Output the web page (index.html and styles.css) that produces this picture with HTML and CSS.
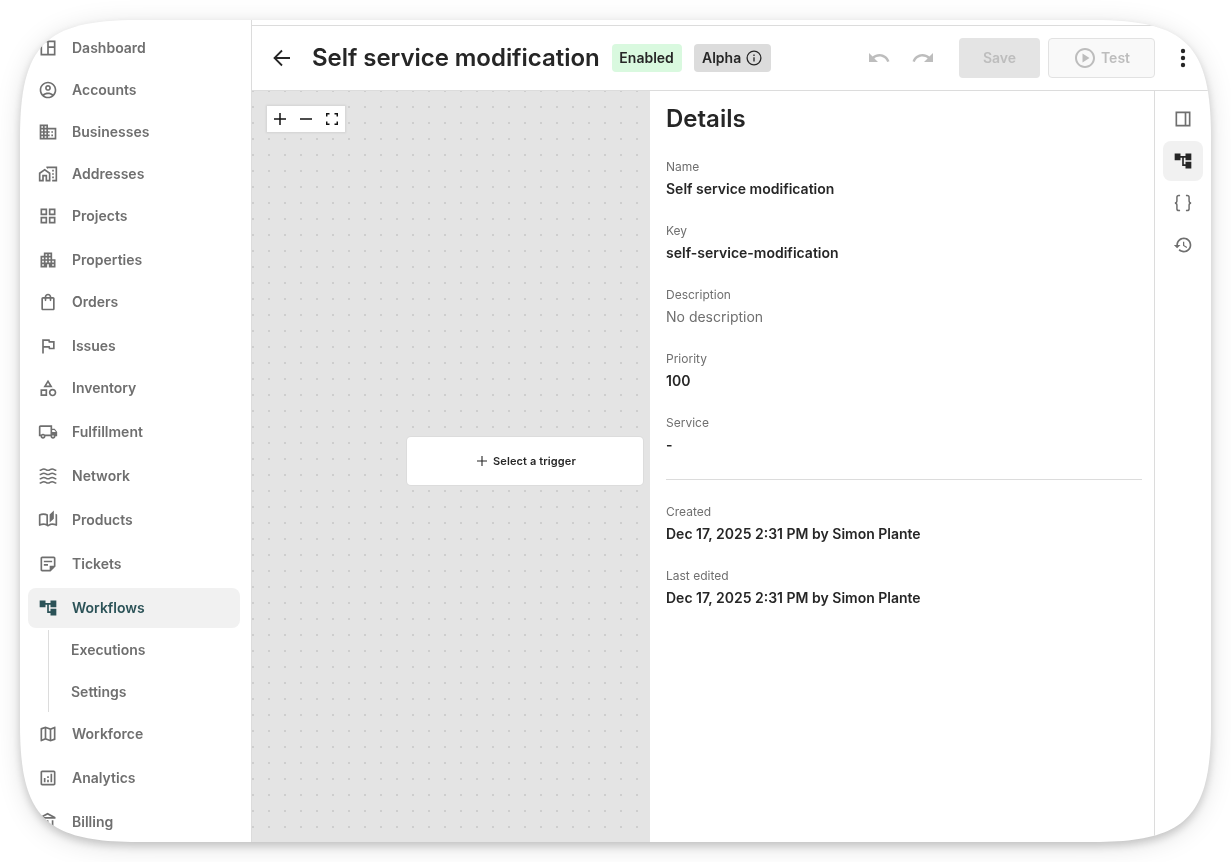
FILE: index.html
```html
<!DOCTYPE html>
<html lang="en">
<head>
    <meta charset="UTF-8">
    <meta name="viewport" content="width=device-width, initial-scale=1.0">
    <title>Self service modification - Workflows</title>
    <link rel="stylesheet" href="styles.css">
</head>
<body>
    <div class="window-shadow">
    <div class="window">

        <!-- Sidebar -->
        <nav class="sidebar">
            <a class="nav-item">
                <svg viewBox="0 0 24 24"><path d="M3 3v18h18V3H3zm2 2h6v14H5V5zm8 0h6v5h-6V5zm0 7h6v7h-6v-7z"/></svg>
                Dashboard
            </a>
            <a class="nav-item">
                <svg viewBox="0 0 24 24"><path d="M12 2C6.48 2 2 6.48 2 12s4.48 10 10 10 10-4.48 10-10S17.52 2 12 2zM7.35 18.5C8.66 17.56 10.26 17 12 17s3.34.56 4.65 1.5C15.34 19.44 13.74 20 12 20s-3.34-.56-4.65-1.5zm10.79-1.38C16.45 15.8 14.32 15 12 15s-4.45.8-6.14 2.12C4.7 15.73 4 13.95 4 12c0-4.42 3.58-8 8-8s8 3.58 8 8c0 1.95-.7 3.73-1.86 5.12zM12 6c-1.93 0-3.5 1.57-3.5 3.5S10.07 13 12 13s3.5-1.57 3.5-3.5S13.93 6 12 6zm0 5c-.83 0-1.5-.67-1.5-1.5S11.17 8 12 8s1.5.67 1.5 1.5S12.83 11 12 11z"/></svg>
                Accounts
            </a>
            <a class="nav-item">
                <svg viewBox="0 0 24 24"><path d="M12 7V3H2v18h20V7H12zM6 19H4v-2h2v2zm0-4H4v-2h2v2zm0-4H4V9h2v2zm0-4H4V5h2v2zm4 12H8v-2h2v2zm0-4H8v-2h2v2zm0-4H8V9h2v2zm0-4H8V5h2v2zm10 12h-8v-2h2v-2h-2v-2h2v-2h-2V9h8v10zm-2-8h-2v2h2v-2zm0 4h-2v2h2v-2z"/></svg>
                Businesses
            </a>
            <a class="nav-item">
                <svg viewBox="0 0 24 24"><path d="M17 7h2v2h-2zM17 11h2v2h-2zM17 15h2v2h-2zM10 3v1.5l2 1.35V5h9v14h-4v2h6V3z"/><path fill-rule="evenodd" d="M8 5.6l7 5V21H9v-6H7v6H1V10.6l7-5zM3 11.6V19h2v-6h6v6h2v-7.4L8 8z"/></svg>
                Addresses
            </a>
            <a class="nav-item">
                <svg viewBox="0 0 24 24"><path d="M3 3v8h8V3H3zm6 6H5V5h4v4zm-6 4v8h8v-8H3zm6 6H5v-4h4v4zm4-16v8h8V3h-8zm6 6h-4V5h4v4zm-6 4v8h8v-8h-8zm6 6h-4v-4h4v4z"/></svg>
                Projects
            </a>
            <a class="nav-item spaced">
                <svg viewBox="0 0 24 24"><path d="M17 11V3H7v4H3v14h8v-4h2v4h8V11h-4zM7 19H5v-2h2v2zm0-4H5v-2h2v2zm0-4H5V9h2v2zm4 4H9v-2h2v2zm0-4H9V9h2v2zm0-4H9V5h2v2zm4 8h-2v-2h2v2zm0-4h-2V9h2v2zm0-4h-2V5h2v2zm4 12h-2v-2h2v2zm0-4h-2v-2h2v2z"/></svg>
                Properties
            </a>
            <a class="nav-item">
                <svg viewBox="0 0 24 24"><path d="M18 6h-2c0-2.21-1.79-4-4-4S8 3.79 8 6H6c-1.1 0-2 .9-2 2v12c0 1.1.9 2 2 2h12c1.1 0 2-.9 2-2V8c0-1.1-.9-2-2-2zm-6-2c1.1 0 2 .9 2 2h-4c0-1.1.9-2 2-2zm6 16H6V8h2v2c0 .55.45 1 1 1s1-.45 1-1V8h4v2c0 .55.45 1 1 1s1-.45 1-1V8h2v12z"/></svg>
                Orders
            </a>
            <a class="nav-item spaced">
                <svg viewBox="0 0 24 24"><path d="M12.36 6l.4 2H18v6h-3.36l-.4-2H7V6h5.36M14 4H5v17h2v-7h5.6l.4 2h7V6h-5.6L14 4z"/></svg>
                Issues
            </a>
            <a class="nav-item">
                <svg viewBox="0 0 24 24"><path d="M12 2l-5.5 9h11L12 2zm0 3.84L13.93 9h-3.87L12 5.84zM17.5 13c-2.49 0-4.5 2.01-4.5 4.5s2.01 4.5 4.5 4.5 4.5-2.01 4.5-4.5-2.01-4.5-4.5-4.5zm0 7c-1.38 0-2.5-1.12-2.5-2.5s1.12-2.5 2.5-2.5 2.5 1.12 2.5 2.5-1.12 2.5-2.5 2.5zM3 21.5h8v-8H3v8zm2-6h4v4H5v-4z"/></svg>
                Inventory
            </a>
            <a class="nav-item spaced">
                <svg viewBox="0 0 24 24"><path d="M20 8h-3V4H3c-1.1 0-2 .9-2 2v11h2c0 1.66 1.34 3 3 3s3-1.34 3-3h6c0 1.66 1.34 3 3 3s3-1.34 3-3h2v-5l-3-4zm-.5 1.5l1.96 2.5H17V9.5h2.5zM6 18c-.55 0-1-.45-1-1s.45-1 1-1 1 .45 1 1-.45 1-1 1zm2.22-3c-.55-.61-1.33-1-2.22-1s-1.67.39-2.22 1H3V6h12v9H8.22zM18 18c-.55 0-1-.45-1-1s.45-1 1-1 1 .45 1 1-.45 1-1 1z"/></svg>
                Fulfillment
            </a>
            <a class="nav-item spaced">
                <svg viewBox="0 0 24 24" class="line"><path d="M2 5.200c2.500 0 2.500-1.700 5-1.700s2.500 1.700 5 1.700 2.500-1.700 5-1.700 2.500 1.700 5 1.700M2 10.300c2.500 0 2.500-1.700 5-1.700s2.500 1.700 5 1.700 2.500-1.700 5-1.700 2.500 1.700 5 1.700M2 15.400c2.500 0 2.500-1.700 5-1.700s2.500 1.700 5 1.700 2.500-1.700 5-1.700 2.500 1.700 5 1.700M2 20.500c2.500 0 2.500-1.700 5-1.700s2.500 1.700 5 1.700 2.500-1.700 5-1.700 2.500 1.700 5 1.700"/></svg>
                Network
            </a>
            <a class="nav-item spaced">
                <svg viewBox="0 0 24 24"><path d="M22.47 5.2c-.47-.24-.96-.44-1.47-.61v12.03c-1.14-.41-2.31-.62-3.5-.62-1.9 0-3.78.54-5.5 1.58V5.48C10.38 4.55 8.51 4 6.5 4c-1.79 0-3.48.44-4.97 1.2-.33.16-.53.51-.53.88v12.08c0 .58.47.99 1 .99.16 0 .32-.04.48-.12C3.69 18.4 5.05 18 6.5 18c2.07 0 3.98.82 5.5 2 1.52-1.18 3.43-2 5.5-2 1.45 0 2.81.4 4.02 1.04.16.08.32.12.48.12.52 0 1-.41 1-.99V6.08c0-.37-.2-.72-.53-.88zM10 16.62C8.86 16.21 7.69 16 6.5 16s-2.36.21-3.5.62V6.71C4.11 6.24 5.28 6 6.5 6c1.2 0 2.39.25 3.5.72v9.9zM19 .5l-5 5V15l5-4.5V.5z"/></svg>
                Products
            </a>
            <a class="nav-item spaced">
                <svg viewBox="0 0 24 24"><path d="M19 5v9h-5v5H5V5h14m0-2H5c-1.1 0-2 .9-2 2v14c0 1.1.9 2 2 2h10l6-6V5c0-1.1-.9-2-2-2zm-7 11H7v-2h5v2zm5-4H7V8h10v2z"/></svg>
                Tickets
            </a>
            <a class="nav-item spaced active">
                <svg viewBox="0 0 24 24"><path d="M22 11V3h-7v3H9V3H2v8h7V8h2v10h4v3h7v-8h-7v3h-2V8h2v3z"/></svg>
                Workflows
            </a>
            <div class="sub-nav">
                <a class="sub-item">Executions</a>
                <a class="sub-item">Settings</a>
            </div>
            <a class="nav-item">
                <svg viewBox="0 0 24 24"><path d="M20.5 3l-.16.03L15 5.1 9 3 3.36 4.9c-.21.07-.36.25-.36.48V20.5c0 .28.22.5.5.5l.16-.03L9 18.9l6 2.1 5.64-1.9c.21-.07.36-.25.36-.48V3.5c0-.28-.22-.5-.5-.5zM10 5.47l4 1.4v11.66l-4-1.4V5.47zm-5 .99l3-1.01v11.7l-3 1.16V6.46zm14 11.08l-3 1.01V6.86l3-1.16v11.84z"/></svg>
                Workforce
            </a>
            <a class="nav-item spaced">
                <svg viewBox="0 0 24 24"><path d="M19 3H5c-1.1 0-2 .9-2 2v14c0 1.1.9 2 2 2h14c1.1 0 2-.9 2-2V5c0-1.1-.9-2-2-2zm0 16H5V5h14v14zM7 12h2v5H7zM15 7h2v10h-2zM11 14h2v3h-2zM11 10h2v2h-2z"/></svg>
                Analytics
            </a>
            <a class="nav-item spaced">
                <svg viewBox="0 0 24 24"><path d="M6.5 10h-2v7h2v-7zm6 0h-2v7h2v-7zm8.5 9H2v2h19v-2zm-2.5-9h-2v7h2v-7zm-7-6.74L16.71 6H6.29l5.21-2.74m0-2.26L2 6v2h19V6l-9.5-5z"/></svg>
                Billing
            </a>
        </nav>

        <main class="main">
            <!-- Header -->
            <header class="header">
                <svg class="back" viewBox="0 0 20 20"><path d="M18 10H3M10 2.500L2.500 10l7.500 7.500"/></svg>
                <h1 class="title">Self service modification</h1>
                <span class="tag tag-enabled">Enabled</span>
                <span class="tag tag-alpha">
                    Alpha
                    <svg viewBox="0 0 16 16"><circle cx="8" cy="8" r="6.9"/><path d="M8 7.2v4.2M8 4.5v1.4"/></svg>
                </span>
                <div class="actions">
                    <svg class="history-icon" viewBox="0 0 24 24"><path d="M12.5 8c-2.65 0-5.05.99-6.9 2.6L2 7v9h9l-3.62-3.62c1.39-1.16 3.16-1.88 5.12-1.88 3.54 0 6.55 2.31 7.6 5.5l2.37-.78C21.08 11.03 17.15 8 12.5 8z"/></svg>
                    <svg class="history-icon" viewBox="0 0 24 24"><path d="M18.4 10.6C16.55 8.99 14.15 8 11.5 8c-4.65 0-8.58 3.03-9.96 7.22L3.9 16c1.05-3.19 4.05-5.5 7.6-5.5 1.95 0 3.73.72 5.12 1.88L13 16h9V7l-3.6 3.6z"/></svg>
                    <button class="btn btn-save" disabled>Save</button>
                    <button class="btn btn-test" disabled>
                        <svg viewBox="0 0 24 24"><path d="M9.5 16.5l7-4.5-7-4.5v9zM12 2C6.48 2 2 6.48 2 12s4.48 10 10 10 10-4.48 10-10S17.52 2 12 2zm0 18c-4.41 0-8-3.59-8-8s3.59-8 8-8 8 3.59 8 8-3.59 8-8 8z"/></svg>
                        Test
                    </button>
                    <svg class="more" viewBox="0 0 24 24"><circle cx="12" cy="5" r="2.2"/><circle cx="12" cy="12" r="2.2"/><circle cx="12" cy="19" r="2.2"/></svg>
                </div>
            </header>

            <div class="content">
                <!-- Workflow canvas -->
                <section class="canvas">
                    <div class="zoom-controls">
                        <button><svg viewBox="0 0 12 12"><path d="M6 0v12M0 6h12"/></svg></button>
                        <button><svg viewBox="0 0 12 12"><path d="M0 6h12"/></svg></button>
                        <button><svg viewBox="0 0 12 12"><path d="M.7 3.5V.7h2.8M8.5.7h2.8v2.8M11.3 8.5v2.8H8.5M3.5 11.3H.7V8.5"/></svg></button>
                    </div>
                    <div class="trigger-node">
                        <svg viewBox="0 0 10 10"><path d="M5 0v10M0 5h10"/></svg>
                        Select a trigger
                    </div>
                </section>

                <!-- Details -->
                <section class="details">
                    <h2>Details</h2>
                    <dl>
                        <dt>Name</dt>
                        <dd>Self service modification</dd>
                        <dt>Key</dt>
                        <dd>self-service-modification</dd>
                        <dt>Description</dt>
                        <dd class="empty">No description</dd>
                        <dt>Priority</dt>
                        <dd>100</dd>
                        <dt>Service</dt>
                        <dd>-</dd>
                    </dl>
                    <hr>
                    <dl>
                        <dt>Created</dt>
                        <dd>Dec 17, 2025 2:31 PM by Simon Plante</dd>
                        <dt>Last edited</dt>
                        <dd>Dec 17, 2025 2:31 PM by Simon Plante</dd>
                    </dl>
                </section>

                <!-- Tool rail -->
                <aside class="rail">
                    <button class="rail-btn">
                        <svg viewBox="0 0 24 24"><path d="M3 3v18h18V3H3zm2 2h9v14H5V5zm11 0h3v14h-3V5z"/></svg>
                    </button>
                    <button class="rail-btn active">
                        <svg viewBox="0 0 24 24"><path d="M22 11V3h-7v3H9V3H2v8h7V8h2v10h4v3h7v-8h-7v3h-2V8h2v3z"/></svg>
                    </button>
                    <button class="rail-btn">
                        <svg viewBox="0 0 24 24" class="line"><path d="M8.500 3H7C5.500 3 4.700 3.900 4.700 5.200v4c0 1.600-.8 2.800-2.500 2.800 1.700 0 2.500 1.200 2.500 2.800v4c0 1.300.8 2.200 2.300 2.200h1.500M15.500 3H17c1.500 0 2.300.9 2.300 2.200v4c0 1.600.8 2.800 2.500 2.800-1.700 0-2.500 1.200-2.500 2.800v4c0 1.300-.8 2.200-2.300 2.200h-1.500"/></svg>
                    </button>
                    <button class="rail-btn">
                        <svg viewBox="0 0 24 24"><path d="M13 3c-4.97 0-9 4.03-9 9H1l3.89 3.89.07.14L9 12H6c0-3.87 3.13-7 7-7s7 3.13 7 7-3.13 7-7 7c-1.93 0-3.68-.79-4.94-2.06l-1.42 1.42C8.27 19.99 10.51 21 13 21c4.97 0 9-4.03 9-9s-4.03-9-9-9zm-1 5v5l4.28 2.54.72-1.21-3.5-2.08V8H12z"/></svg>
                    </button>
                </aside>
            </div>
        </main>

    </div>
    </div>
</body>
</html>
```

FILE: styles.css
```css
* {
    margin: 0;
    padding: 0;
    box-sizing: border-box;
}

body {
    font-family: Inter, 'Liberation Sans', sans-serif;
    font-size: 14px;
    line-height: 20px;
    color: #262626;
    background: #fff;
    padding: 20px;
    height: 862px;
    overflow: hidden;
}

button {
    font: inherit;
    border: none;
    background: none;
}

.window-shadow {
    width: 1191px;
    height: 822px;
    filter: drop-shadow(0 4px 4px rgba(0, 0, 0, 0.17)) drop-shadow(0 4px 12px rgba(0, 0, 0, 0.12));
}

/* smooth corners, flatter at the ends than a plain border-radius */
.window {
    display: flex;
    height: 100%;
    background: #fff;
    clip-path: path('M0 118C0 25 25 0 118 0H1073C1166 0 1191 25 1191 118V704C1191 797 1166 822 1073 822H118C25 822 0 797 0 704Z');
}

/* Sidebar */
.sidebar {
    width: 232px;
    flex-shrink: 0;
    padding: 8px 11px 0 8px;
    border-right: 1px solid #dcdcdc;
    overflow: hidden;
}

.nav-item {
    display: flex;
    align-items: center;
    gap: 14px;
    height: 40px;
    margin-bottom: 2px;
    padding-left: 10px;
    border-radius: 8px;
    font-weight: 600;
    color: #6f6f6f;
}

.nav-item.spaced {
    margin-top: 4px;
}

.nav-item svg {
    width: 20px;
    height: 20px;
    fill: currentColor;
}

.line {
    stroke: currentColor;
    stroke-width: 1.8;
}

.nav-item .line,
.rail-btn .line {
    fill: none;
}

.nav-item.active {
    background: #f1f1f1;
    color: #2b5257;
}

.sub-nav {
    margin-left: 20px;
    margin-bottom: 2px;
    border-left: 1px solid #dcdcdc;
}

.sub-item {
    display: flex;
    align-items: center;
    height: 40px;
    padding-left: 22px;
    font-weight: 600;
    color: #6f6f6f;
}

.sub-item + .sub-item {
    margin-top: 2px;
}

/* Header */
.main {
    flex: 1;
    display: flex;
    flex-direction: column;
    min-width: 0;
    padding-top: 5px;
}

.header {
    display: flex;
    align-items: center;
    height: 66px;
    flex-shrink: 0;
    padding: 0 16px 0 20px;
    border-top: 1px solid #dcdcdc;
    border-bottom: 1px solid #dcdcdc;
}

.back {
    width: 20px;
    height: 20px;
    fill: none;
    stroke: #262626;
    stroke-width: 1.8;
}

.title {
    margin-left: 20px;
    font-size: 24px;
    font-weight: 600;
    line-height: 32px;
    letter-spacing: -0.04px;
    white-space: nowrap;
}

.tag {
    display: flex;
    align-items: center;
    height: 28px;
    border-radius: 4px;
    font-weight: 600;
}

.tag-enabled {
    width: 70px;
    margin-left: 12px;
    justify-content: center;
    background: #d9f9df;
}

.tag-alpha {
    width: 77px;
    margin-left: 12px;
    justify-content: center;
    gap: 5px;
    background: #dcdcdc;
}

.tag-alpha svg {
    width: 16px;
    height: 16px;
    fill: none;
    stroke: #262626;
    stroke-width: 1.3;
}

.actions {
    display: flex;
    align-items: center;
    margin-left: auto;
}

.history-icon {
    width: 24px;
    height: 24px;
    margin-right: 20px;
    fill: #bdbdbd;
}

.btn {
    display: flex;
    align-items: center;
    justify-content: center;
    height: 40px;
    border-radius: 4px;
    font-weight: 600;
    color: #bdbdbd;
}

.btn-save {
    width: 81px;
    margin-left: 4px;
    background: #e4e4e4;
}

.btn-test {
    width: 107px;
    margin-left: 8px;
    gap: 4px;
    background: #f9f9f9;
    border: 1px solid #e2e2e2;
}

.btn-test svg {
    width: 24px;
    height: 24px;
    fill: #bdbdbd;
}

.more {
    width: 24px;
    height: 24px;
    margin-left: 16px;
    fill: #262626;
}

/* Content */
.content {
    flex: 1;
    display: flex;
    min-height: 0;
}

.canvas {
    position: relative;
    flex: 1;
    background-color: #e4e4e4;
    background-image: radial-gradient(circle at 8px 8px, #cecece 1px, transparent 1.2px);
    background-size: 16px 16px;
    background-position: -7px -8px;
}

.zoom-controls {
    position: absolute;
    top: 15px;
    left: 15px;
    display: flex;
    background: #fff;
    box-shadow: 0 0 2px 1px rgba(0, 0, 0, 0.08);
}

.zoom-controls button {
    display: flex;
    align-items: center;
    justify-content: center;
    width: 26px;
    height: 26px;
}

.zoom-controls svg {
    width: 12px;
    height: 12px;
    fill: none;
    stroke: #111;
    stroke-width: 1.5;
}

.trigger-node {
    position: absolute;
    top: 346px;
    left: 155px;
    display: flex;
    align-items: center;
    justify-content: center;
    gap: 6px;
    width: 236px;
    height: 48px;
    padding-left: 3px;
    background: #fff;
    border-radius: 4px;
    box-shadow: 0 0 0 1px #dcdcdc;
    font-size: 11px;
    font-weight: 600;
    line-height: normal;
    letter-spacing: 0.12px;
}

.trigger-node svg {
    width: 10px;
    height: 10px;
    fill: none;
    stroke: #262626;
    stroke-width: 1.1;
}

.details {
    width: 504px;
    padding: 12px 12px 0 16px;
}

.details h2 {
    font-size: 24px;
    font-weight: 600;
    line-height: 32px;
    margin-bottom: 24px;
}

.details dt {
    font-size: 12px;
    line-height: 16px;
    margin-bottom: 4px;
    color: #6f6f6f;
}

.details dd {
    margin-bottom: 24px;
    font-weight: 600;
}

.details dd.empty {
    font-weight: 400;
    color: #6f6f6f;
}

.details hr {
    border: none;
    border-top: 1px solid #dcdcdc;
    margin-bottom: 24px;
}

/* Tool rail */
.rail {
    display: flex;
    flex-direction: column;
    gap: 2px;
    width: 57px;
    padding: 8px;
    border-left: 1px solid #dcdcdc;
}

.rail-btn {
    display: flex;
    align-items: center;
    justify-content: center;
    width: 40px;
    height: 40px;
    border-radius: 8px;
    color: #6f6f6f;
}

.rail-btn svg {
    width: 20px;
    height: 20px;
    fill: currentColor;
}

.rail-btn.active {
    background: #f1f1f1;
    color: #262626;
}
```
